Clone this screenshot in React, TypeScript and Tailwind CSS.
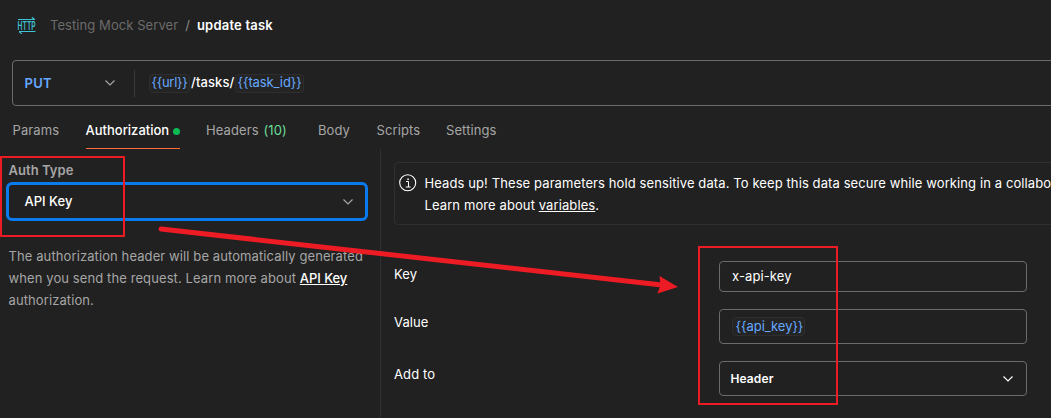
import React from "react";

function Chevron({ className = "" }: { className?: string }) {
  return (
    <svg width="12" height="8" viewBox="0 0 12 8" fill="none" className={className}>
      <path d="M1.5 1.5L6 6L10.5 1.5" stroke="currentColor" strokeWidth="1.2" />
    </svg>
  );
}

function HttpIcon() {
  return (
    <svg width="20" height="18" viewBox="0 0 20 18" fill="none" className="relative top-[0.5px] shrink-0 overflow-visible text-[#3fc4d6]">
      <path d="M1 2.5H18M14.8 0.2L17.6 2.5" stroke="currentColor" strokeWidth="1.1" />
      <path d="M18.5 14.5H2M4.8 16.8L2 14.5" stroke="currentColor" strokeWidth="1.1" />
      <text x="0.6" y="13" fontSize="11.5" textLength="18" lengthAdjust="spacingAndGlyphs" fill="currentColor" className="font-[Inter,sans-serif] font-semibold tracking-normal">
        HTTP
      </text>
    </svg>
  );
}

function Variable({ children, className = "" }: { children: React.ReactNode; className?: string }) {
  return (
    <span className={"flex h-[19px] items-center rounded-[4px] border border-[#2e2e2e] bg-[#242424] text-[#66a8ff] " + className}>
      {children}
    </span>
  );
}

function Field({ label, children, className }: { label: string; children: React.ReactNode; className: string }) {
  return (
    <div className="flex">
      <div className="w-[325px] shrink-0 pt-[3px] leading-[21px]">{label}</div>
      <div className={"flex w-[308px] items-center rounded-[4px] border border-[#6b6b6b] " + className}>{children}</div>
    </div>
  );
}

export default function App() {
  return (
    <div className="relative flex h-[418px] w-[1051px] flex-col overflow-hidden bg-[#212121] font-[Inter,sans-serif] text-[13px] tracking-[0.1px] text-white">
      <header className="flex h-[60px] shrink-0 items-center pb-[9px] pl-[17px] whitespace-pre">
        <HttpIcon />
        <span className="ml-[13px] text-[#6b6b6b] tracking-[0.07px]">Testing Mock Server</span>
        <span className="mx-[7px] text-[#8a8a8a]">/</span>
        <span className="font-semibold tracking-[0.2px]">update task</span>
      </header>

      <div className="ml-3 flex h-[46px] w-[1060px] shrink-0 items-center rounded-[4px] border border-[#6b6b6b]">
        <span className="ml-[11.5px] w-[79.5px] pt-px font-semibold tracking-[0.3px] text-[#66a8ff]">PUT</span>
        <Chevron className="text-[#a6a6a6]" />
        <div className="ml-[18px] h-[27px] w-px bg-[#3a3a3a]" />
        <div className="ml-[14px] flex items-center">
          <Variable className="w-[41px] pl-[1.5px] tracking-[-0.3px]">{"{{url}}"}</Variable>
          <span className="w-[45px] pl-px font-medium">/tasks/</span>
          <Variable className="w-[69px] pl-[1.5px] tracking-[-0.1px]">{"{{task_id}}"}</Variable>
        </div>
      </div>

      <nav className="flex h-[43px] shrink-0 pl-[12.5px] text-[#a6a6a6]">
        <div className="w-[73px] pt-[15px]">Params</div>
        <div className="mr-[26.5px] flex w-[94px] items-center justify-between border-b border-[#ff6c37] pt-[8px] font-medium tracking-[0px] text-white">
          Authorization
          <span className="size-[7px] rounded-full bg-[#0cbb52]" />
        </div>
        <div className="w-[112px] pt-[15px]">
          Headers <span className="ml-px text-[#6bdd9a]">(10)</span>
        </div>
        <div className="w-[58.5px] pt-[15px]">Body</div>
        <div className="w-[69.5px] pt-[15px]">Scripts</div>
        <div className="pt-[15px]">Settings</div>
      </nav>

      <main className="flex flex-1">
        <aside className="w-[381px] shrink-0 border-r border-[#303030] pl-[6px]">
          <div className="pt-[10px] pl-[2.5px] leading-[22px] font-semibold tracking-[0.05px] text-[#a6a6a6]">Auth Type</div>
          <div className="mt-px flex h-[39px] w-[362px] items-center justify-between rounded-[6px] border-3 border-[#097bed] pr-[11px] pl-[15.5px] font-medium tracking-[0px]">
            API Key
            <Chevron className="text-[#a6a6a6]" />
          </div>
          <p className="mt-[24px] pl-[2.5px] leading-[22px] whitespace-nowrap text-[#a6a6a6]">
            The authorization header will be automatically generated
            <br />
            when you send the request. Learn more about <a className="font-medium tracking-[-0.05px] text-white underline">API Key</a>
            <br />
            authorization.
          </p>
        </aside>

        <section className="shrink-0 pt-[13px] pl-[13px]">
          <div className="flex h-[63px] w-[700px] rounded-[4px] border border-[#303030] pt-[9px] pl-[4px]">
            <svg width="18" height="18" viewBox="0 0 18 18" fill="none" className="mt-[2px] shrink-0">
              <circle cx="8.7" cy="8.7" r="8" stroke="#fff" strokeWidth="1.1" />
              <path d="M7 7.5H9.5V13M6.8 13H11.6" stroke="#fff" />
              <rect x="8.3" y="4.5" width="1.5" height="1.5" fill="#fff" />
            </svg>
            <p className="ml-[7.5px] leading-[22px] whitespace-nowrap">
              Heads up! These parameters hold sensitive data. To keep this data secure while working in a collaborative
              <br />
              Learn more about <a className="underline">variables</a>.
            </p>
          </div>

          <div className="mt-[36px] flex flex-col">
            <Field label="Key" className="h-[31px] pl-[12px]">
              x-api-key
            </Field>
            <div className="h-[17px]" />
            <Field label="Value" className="h-[35px] pl-[12px]">
              <Variable className="w-[73px] pl-[2.5px] tracking-[-0.05px]">{"{{api_key}}"}</Variable>
            </Field>
            <div className="h-[17px]" />
            <Field label="Add to" className="h-[35px] justify-between pr-[12px] pl-[10.5px]">
              <span className="text-[12px] font-semibold">Header</span>
              <Chevron />
            </Field>
          </div>
        </section>
      </main>

      <div className="absolute top-[156px] left-0 h-[81px] w-[125px] border-2 border-[#ed1c24]" />
      <div className="absolute top-[246px] left-[698px] h-[159px] w-[140px] border-2 border-[#ed1c24]" />
      <svg className="absolute top-0 left-0" width="1051" height="418" viewBox="0 0 1051 418">
        <path d="M161 229L662 285" stroke="#ed1c24" strokeWidth="5" strokeLinecap="round" />
        <path d="M659.5 276L678 287L657.5 293.5L660.5 285Z" fill="#ed1c24" />
      </svg>
    </div>
  );
}
